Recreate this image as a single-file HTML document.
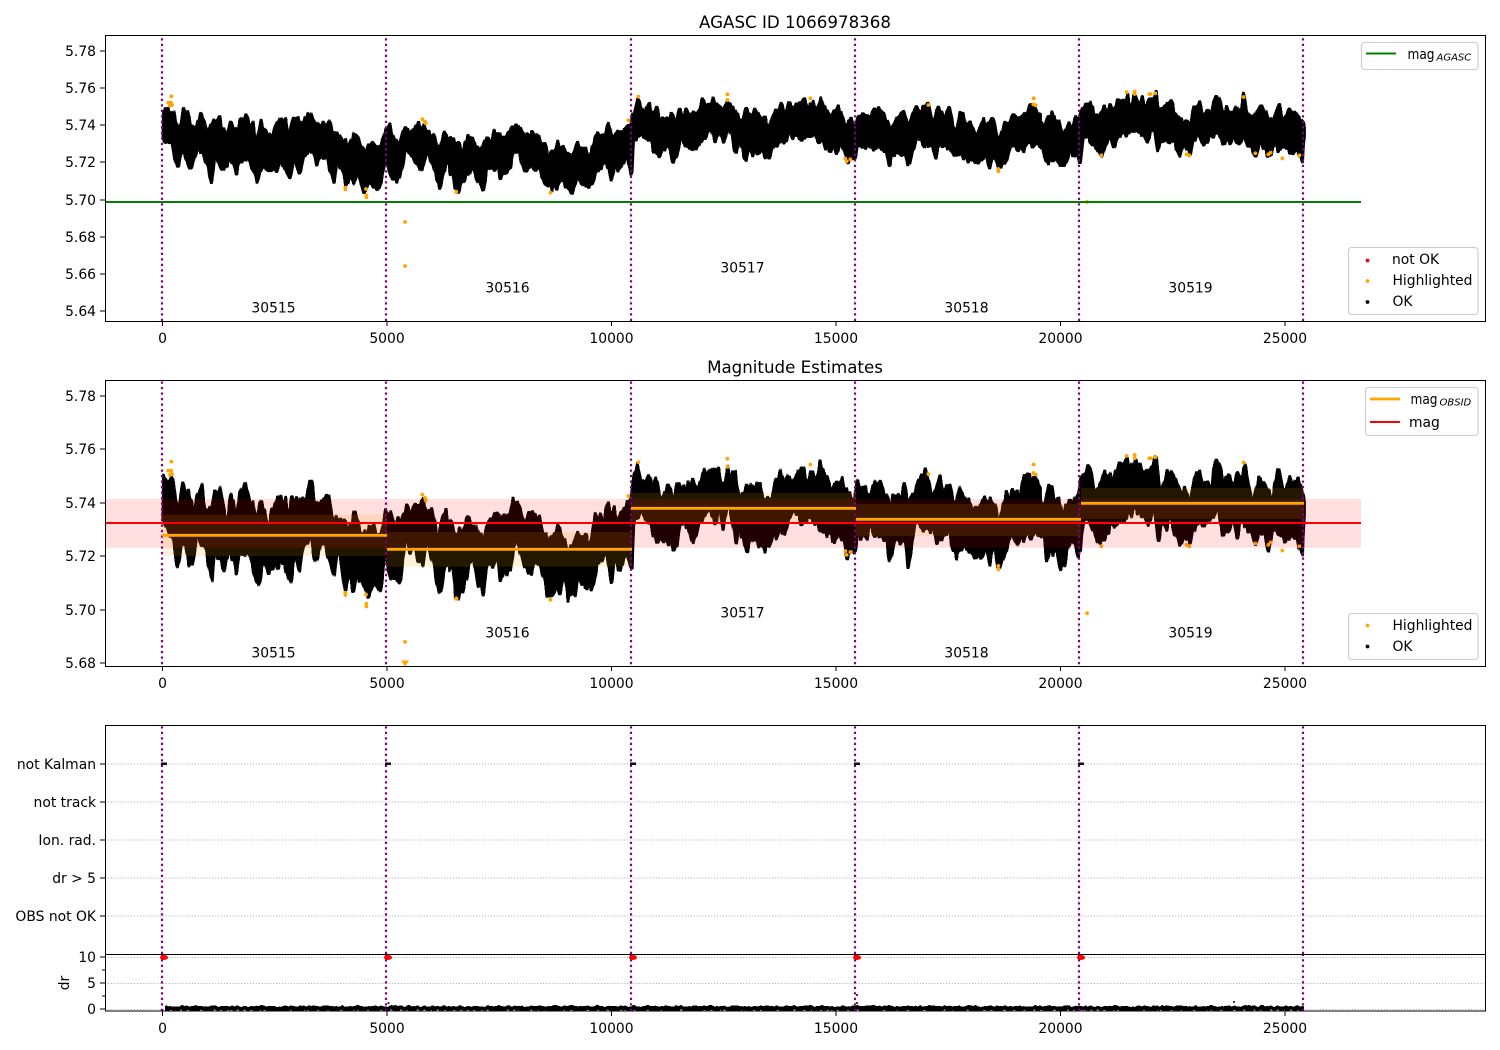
<!DOCTYPE html>
<html><head><meta charset="utf-8"><title>AGASC ID 1066978368</title>
<style>
html,body{margin:0;padding:0;background:#fff}
svg{display:block}
text{font-family:"DejaVu Sans","Liberation Sans",sans-serif;font-size:13.89px;fill:#000}
.r{text-anchor:end}.m{text-anchor:middle}
.d{fill:#000;stroke:#000;stroke-width:1.8;stroke-linejoin:round;vector-effect:non-scaling-stroke}
.o{fill:none;stroke:#ffa500;stroke-width:3.8;stroke-linecap:round;vector-effect:non-scaling-stroke}
.v{stroke:#800080;stroke-width:2.2;stroke-dasharray:2.2 3.3;fill:none}
.g{stroke:#b0b0b0;stroke-width:1.1;stroke-dasharray:1.1 1.8;fill:none}
.k{stroke:#000;stroke-width:1.1;fill:none;shape-rendering:crispEdges}
.leg{fill:#fff;fill-opacity:.8;stroke:#ccc;stroke-width:1.1}
</style></head><body>
<svg width="1500" height="1050" viewBox="0 0 1500 1050" xmlns="http://www.w3.org/2000/svg">
<defs>
<clipPath id="c1"><rect x="105" y="36" width="1380" height="285"/></clipPath>
<clipPath id="c2"><rect x="105" y="380" width="1380" height="286"/></clipPath>
<filter id="r1" filterUnits="userSpaceOnUse" x="150" y="60" width="1170" height="150" color-interpolation-filters="sRGB">
<feTurbulence type="fractalNoise" baseFrequency="0.24 0.03" numOctaves="2" seed="4"/>
<feColorMatrix values="0 0 0 0 .5  0 1 0 0 0  0 0 1 0 0  0 0 0 0 1" result="n"/>
<feDisplacementMap in="SourceGraphic" in2="n" scale="20" xChannelSelector="R" yChannelSelector="G"/>
<feMorphology operator="dilate" radius=".8 .6"/>
</filter>
<filter id="r2" filterUnits="userSpaceOnUse" x="150" y="430" width="1170" height="220" color-interpolation-filters="sRGB">
<feTurbulence type="fractalNoise" baseFrequency="0.24 0.02" numOctaves="2" seed="4"/>
<feColorMatrix values="0 0 0 0 .5  0 1 0 0 0  0 0 1 0 0  0 0 0 0 1" result="n"/>
<feDisplacementMap in="SourceGraphic" in2="n" scale="28" xChannelSelector="R" yChannelSelector="G"/>
<feMorphology operator="dilate" radius=".8 .6"/>
</filter>
<filter id="r3" filterUnits="userSpaceOnUse" x="150" y="995" width="1170" height="20" color-interpolation-filters="sRGB">
<feTurbulence type="fractalNoise" baseFrequency="0.3 0.1" numOctaves="1" seed="7"/>
<feColorMatrix values="0 0 0 0 .5  0 1 0 0 0  0 0 1 0 0  0 0 0 0 1" result="n"/>
<feDisplacementMap in="SourceGraphic" in2="n" scale="4" xChannelSelector="R" yChannelSelector="G"/>
</filter>
<g id="data">
<path class="d" transform="translate(160 90) scale(.33333)" d="M12 60L25 52 40 60 45 95 55 120 62 100 70 60 78 95 85 82 95 110 105 120 115 85 123 72 130 100 145 130 155 115 165 85 178 75 185 110 195 130 205 122 213 95 222 112 232 125 240 85 248 100 256 68 265 95 277 100 285 145 295 135 305 105 318 125 325 155 332 138 342 125 352 92 362 88 370 115 378 108 385 140 395 95 405 108 412 95 425 120 437 88 452 68 462 100 475 120 490 98 505 92 515 130 525 135 532 128 545 150 555 150 562 175 570 152 578 165 583 130 595 145 605 180 612 172 620 185 628 155 640 160 650 180 662 175 668 155 678 125 690 115 705 155 720 150 730 118 745 120 758 125 772 112 790 105 800 125 815 130 828 170 838 170 848 148 858 130 862 150 875 152 890 165 900 165 900 215 888 305 880 250 865 225 850 240 841 290 830 260 815 205 800 195 785 235 770 215 755 195 735 185 722 255 710 260 695 260 678 210 665 260 650 292 640 275 632 290 618 292 605 275 592 235 580 285 570 265 558 290 545 230 530 210 522 268 510 235 495 190 480 195 470 225 458 190 445 185 430 190 418 245 405 210 388 265 375 225 358 225 345 240 325 250 310 215 293 275 280 235 265 205 252 210 240 210 230 252 220 215 205 205 190 240 175 225 165 180 155 272 145 225 130 180 110 180 95 235 80 205 65 185 55 228 45 205 35 160 20 165 10 130Z"/>
<path class="d" transform="translate(450 90) scale(.33333)" d="M0 150L8 150 15 165 30 165 40 175 48 150 55 140 65 150 75 150 85 180 100 178 105 165 112 150 125 150 135 130 145 128 155 155 165 138 180 125 188 105 205 105 215 125 225 155 240 135 250 125 265 140 275 160 285 175 295 200 305 180 322 165 335 170 345 190 358 200 370 195 380 165 395 170 408 180 415 190 425 185 438 140 450 138 465 135 473 105 483 140 495 130 505 135 515 125 530 110 542 100 550 65 565 28 575 60 585 70 598 38 608 85 620 62 630 100 640 95 650 88 665 80 675 100 690 65 700 72 712 65 730 62 745 75 760 32 770 60 783 30 795 50 805 45 820 65 832 40 845 55 855 50 865 90 880 95 892 68 900 75 900 140 895 185 885 198 875 160 865 150 858 190 845 130 832 105 820 165 810 120 795 148 785 120 770 125 755 155 745 150 727 190 712 165 690 150 680 190 670 205 660 175 640 185 625 185 610 175 595 145 575 135 550 145 545 240 530 205 510 235 495 225 485 262 470 215 455 225 440 240 430 282 415 280 395 278 385 260 372 298 355 298 340 260 325 285 300 302 285 275 270 235 255 235 240 235 225 240 205 185 190 190 180 240 165 240 152 268 145 235 125 235 108 235 100 298 85 275 70 235 55 240 42 275 18 305 10 240 0 245Z"/>
<path class="d" transform="translate(740 90) scale(.33333)" d="M0 90L10 90 22 68 35 90 45 72 58 75 70 85 80 105 95 95 105 70 118 65 125 50 135 80 145 45 160 55 175 48 192 28 205 55 215 42 230 50 240 28 250 50 262 50 272 70 290 60 305 58 315 100 332 90 342 115 355 68 370 65 380 85 395 80 415 60 430 80 440 95 450 120 465 90 480 95 492 72 502 110 515 95 530 60 545 52 565 50 578 100 592 70 600 55 615 80 628 60 640 110 650 115 662 70 672 90 680 110 690 105 700 125 715 125 728 100 745 102 760 100 772 135 782 140 795 100 815 80 830 85 840 90 855 60 870 65 882 50 895 70 900 70 900 105 890 130 878 165 860 160 850 178 835 185 815 165 795 210 775 235 765 190 750 222 735 205 720 222 700 210 680 200 660 205 640 205 630 160 610 170 590 185 575 160 550 158 530 145 505 225 495 170 480 195 465 180 450 222 440 180 420 175 395 160 375 175 355 165 345 205 320 210 305 170 285 180 270 180 250 165 235 145 210 135 185 145 165 130 150 140 130 158 100 165 85 200 65 195 45 185 18 198 5 170 0 150Z"/>
<path class="d" transform="translate(1020 90) scale(.33333)" d="M0 90L15 70 25 55 40 50 52 75 60 100 75 115 85 70 95 80 105 110 115 95 125 130 140 115 150 100 175 95 188 50 210 35 220 80 232 75 250 60 268 45 280 60 295 30 308 50 322 20 330 45 345 20 355 40 365 28 375 50 390 25 408 22 418 70 435 55 450 35 465 60 480 90 495 82 510 105 525 55 538 35 550 90 562 65 575 90 582 28 595 20 608 60 625 60 640 70 650 42 665 60 672 25 685 70 700 105 718 55 735 60 745 95 760 90 775 50 790 75 810 70 830 65 850 90 852 100 852 130 846 210 835 185 815 170 795 178 780 170 760 160 745 195 725 160 705 185 685 165 670 130 655 170 640 145 615 170 600 140 585 125 570 140 550 155 530 130 510 185 495 170 480 190 470 170 455 140 440 148 425 145 415 175 405 115 380 148 360 125 345 115 330 130 315 130 295 135 280 160 265 155 245 188 225 170 205 140 190 130 180 215 165 190 150 190 132 228 118 220 100 205 80 218 70 175 50 155 38 165 20 150 5 185 0 180Z"/>
</g>
<g id="high">
<path class="o" transform="translate(160 90) scale(.33333)" d="M34 19h.1M25 38h.1M33 38h.1M36 45h.1M30 47h.1M556 293h.1M556 298h.1M618 297h.1M619 316h.1M619 322h.1M787 88h.1M795 95h.1M797 100h.1M889 305h.1"/>
<path class="o" transform="translate(450 90) scale(.33333)" d="M19 306h.1M301 308h.1M535 91h.1M565 20h.1M832 13h.1M832 30h.1"/>
<path class="o" transform="translate(740 90) scale(.33333)" d="M211 25h.1M316 206h.1M320 214h.1M331 208h.1M565 45h.1M775 237h.1M775 244h.1M881 25h.1M880 43h.1M887 46h.1"/>
<path class="o" transform="translate(1020 90) scale(.33333)" d="M244 196h.1M320 7h.1M344 5h.1M344 12h.1M388 12h.1M392 12h.1M406 10h.1M500 193h.1M508 196h.1M671 21h.1M706 190h.1M745 193h.1M752 188h.1M787 205h.1M838 196h.1"/>
<path class="o" d="M405 222h.1M1087 202h.1"/>
</g>
<g id="vl1"><path class="v" d="M162 321V36M386 321V36M631 321V36M855 321V36M1079 321V36M1303 321V36"/></g>
</defs>

<rect width="1500" height="1050" fill="#fff"/>

<!-- Axes 1 -->
<g clip-path="url(#c1)">
<g filter="url(#r1)"><use href="#data"/></g>
<use href="#high"/>
<path d="M405 266h.1" class="o"/>
<use href="#vl1"/>
<path d="M105 202H1361" stroke="#008000" stroke-width="2.08" fill="none"/>
</g>
<rect x="105.5" y="35.5" width="1380" height="286" class="k"/>
<path class="k" d="M100 51h5M100 88h5M100 125h5M100 162h5M100 200h5M100 237h5M100 274h5M100 311h5M162.5 321v5M387 321v5M611.5 321v5M836 321v5M1060.5 321v5M1285 321v5"/>
<text x="96" y="56" class="r">5.78</text><text x="96" y="93" class="r">5.76</text><text x="96" y="130" class="r">5.74</text><text x="96" y="167" class="r">5.72</text><text x="96" y="205" class="r">5.70</text><text x="96" y="242" class="r">5.68</text><text x="96" y="279" class="r">5.66</text><text x="96" y="316" class="r">5.64</text>
<text x="162.5" y="343" class="m">0</text><text x="387" y="343" class="m">5000</text><text x="611.5" y="343" class="m">10000</text><text x="836" y="343" class="m">15000</text><text x="1060.5" y="343" class="m">20000</text><text x="1285" y="343" class="m">25000</text>
<text x="795" y="28" class="m" style="font-size:16.67px">AGASC ID 1066978368</text>
<text x="273.5" y="312.500" class="m">30515</text><text x="507.5" y="292.500" class="m">30516</text><text x="742.5" y="272.500" class="m">30517</text><text x="966.5" y="312.500" class="m">30518</text><text x="1190.5" y="292.500" class="m">30519</text>

<rect x="1361.5" y="42.5" width="116.5" height="27" rx="3" class="leg"/>
<path d="M1366 53.5h30" stroke="#008000" stroke-width="2.08"/>
<text x="1407.500" y="59" textLength="27" lengthAdjust="spacingAndGlyphs">mag</text><text x="1436.500" y="60.700" style="font-size:10px;font-style:italic">AGASC</text>

<rect x="1348.5" y="247.5" width="129.5" height="67" rx="3" class="leg"/>
<circle cx="1367.5" cy="260.5" r="1.9" fill="#f00"/><circle cx="1367.5" cy="281" r="1.9" fill="#ffa500"/><circle cx="1367.5" cy="302" r="1.9" fill="#000"/>
<text x="1392" y="264">not OK</text><text x="1392.500" y="285">Highlighted</text><text x="1392.500" y="306">OK</text>

<!-- Axes 2 -->
<g clip-path="url(#c2)">
<g filter="url(#r2)"><g transform="translate(0 323.4) scale(1 1.4347)"><use href="#data"/></g></g>
<g transform="translate(0 323.4) scale(1 1.4347)"><use href="#high"/></g>
<path d="M401 660.500h8l-4 6z" fill="#ffa500"/>
<path d="M105 499H1361V547.700H105Z" fill="#f00" fill-opacity=".125"/>
<path d="M162 514.700H387V556H162ZM387 532H632V566.700H387ZM631 493H856V523.500H631ZM856 504H1081V536H856ZM1081 488H1304V519H1081Z" fill="#ffa500" fill-opacity=".14"/>
<path d="M162 380V666M386 380V666M631 380V666M855 380V666M1079 380V666M1303 380V666" class="v" transform="translate(0 1.500)"/>
<path d="M162 535.300H387M387 549.300H632M631 508.300H856M856 519.300H1081M1081 503.300H1304" stroke="#ffa500" stroke-width="2.78" fill="none"/>
<path d="M105 523H1361" stroke="#f00" stroke-width="2.08" fill="none"/>
</g>
<rect x="105.5" y="380.500" width="1380" height="286" class="k"/>
<path class="k" d="M100 396h5M100 449h5M100 503h5M100 556h5M100 610h5M100 663h5M162.5 666v5M387 666v5M611.5 666v5M836 666v5M1060.5 666v5M1285 666v5"/>
<text x="96" y="401" class="r">5.78</text><text x="96" y="454" class="r">5.76</text><text x="96" y="508" class="r">5.74</text><text x="96" y="561" class="r">5.72</text><text x="96" y="615" class="r">5.70</text><text x="96" y="668" class="r">5.68</text>
<text x="162.5" y="688" class="m">0</text><text x="387" y="688" class="m">5000</text><text x="611.5" y="688" class="m">10000</text><text x="836" y="688" class="m">15000</text><text x="1060.5" y="688" class="m">20000</text><text x="1285" y="688" class="m">25000</text>
<text x="795" y="373" class="m" style="font-size:16.67px">Magnitude Estimates</text>
<text x="273.5" y="657.500" class="m">30515</text><text x="507.5" y="637.500" class="m">30516</text><text x="742.5" y="617.500" class="m">30517</text><text x="966.5" y="657.500" class="m">30518</text><text x="1190.5" y="637.500" class="m">30519</text>

<rect x="1365.5" y="387.500" width="112.500" height="48" rx="3" class="leg"/>
<path d="M1370 399h30" stroke="#ffa500" stroke-width="2.78"/><path d="M1370 422h30" stroke="#f00" stroke-width="2.08"/>
<text x="1410.500" y="404" textLength="27" lengthAdjust="spacingAndGlyphs">mag</text><text x="1439.500" y="405.700" style="font-size:10px;font-style:italic">OBSID</text><text x="1409" y="427">mag</text>

<rect x="1348.5" y="613.500" width="129.500" height="46" rx="3" class="leg"/>
<circle cx="1367.5" cy="625.500" r="1.9" fill="#ffa500"/><circle cx="1367.5" cy="646.500" r="1.9" fill="#000"/>
<text x="1392.500" y="630">Highlighted</text><text x="1392.500" y="651">OK</text>

<!-- Axes 3 -->
<path class="g" d="M105 764H1485M105 802H1485M105 840H1485M105 878H1485M105 916H1485"/>
<path class="v" d="M162 954V725M386 954V725M631 954V725M855 954V725M1079 954V725M1303 954V725"/>
<path d="M161 762.500h6v2.500h-6zM385 762.500h6v2.500h-6zM630 762.500h6v2.500h-6zM854 762.500h6v2.500h-6zM1078 762.500h6v2.500h-6z" fill="#111"/>
<rect x="105.5" y="725.500" width="1380" height="229" class="k"/>
<path class="k" d="M100 764h5M100 802h5M100 840h5M100 878h5M100 916h5"/>
<text x="96" y="769" class="r">not Kalman</text><text x="96" y="807" class="r">not track</text><text x="96" y="845" class="r">Ion. rad.</text><text x="96" y="883" class="r">dr &gt; 5</text><text x="96" y="921" class="r">OBS not OK</text>

<!-- Axes 4 -->
<path class="g" d="M105 957.500H1485M105 983.500H1485M105 1009.500H1485"/>
<g filter="url(#r3)"><path d="M165 1006H1304V1010.500H165Z" fill="#000"/></g>
<circle cx="388.500" cy="1003" r="1" fill="#000"/><circle cx="857" cy="995" r="1" fill="#000"/><circle cx="857" cy="1003" r="1" fill="#000"/><circle cx="1234" cy="1002" r="1" fill="#000"/>
<path class="v" d="M162 1011V954M386 1011V954M631 1011V954M855 1011V954M1079 1011V954M1303 1011V954"/>
<g fill="#f00"><ellipse cx="164" cy="957.500" rx="4" ry="2.500"/><ellipse cx="388" cy="957.500" rx="4" ry="2.500"/><ellipse cx="633" cy="957.500" rx="4" ry="2.500"/><ellipse cx="857" cy="957.500" rx="4" ry="2.500"/><ellipse cx="1081" cy="957.500" rx="4" ry="2.500"/></g>
<rect x="105.5" y="954.500" width="1380" height="56.500" class="k"/>
<path class="k" d="M100 957h5M102 970h3M100 983h5M102 996h3M100 1009h5M162.5 1011v5M387 1011v5M611.5 1011v5M836 1011v5M1060.5 1011v5M1285 1011v5"/>
<text x="96" y="962" class="r">10</text><text x="96" y="988" class="r">5</text><text x="96" y="1014" class="r">0</text>
<text transform="translate(69 983) rotate(-90)" class="m">dr</text>
<text x="162.5" y="1033" class="m">0</text><text x="387" y="1033" class="m">5000</text><text x="611.5" y="1033" class="m">10000</text><text x="836" y="1033" class="m">15000</text><text x="1060.5" y="1033" class="m">20000</text><text x="1285" y="1033" class="m">25000</text>
</svg>
</body></html>
